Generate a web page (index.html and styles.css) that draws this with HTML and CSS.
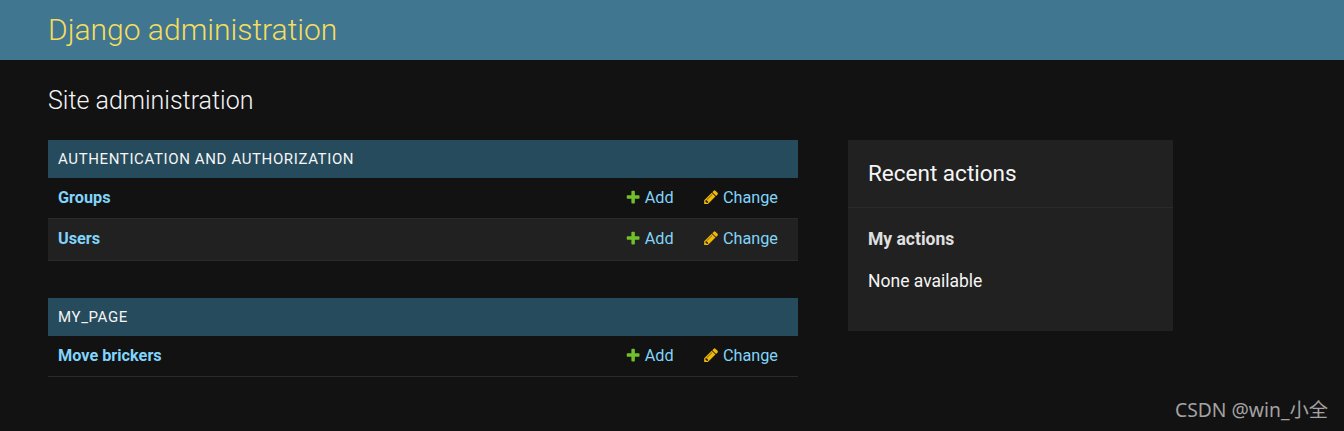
FILE: index.html
```html
<!DOCTYPE html>
<html lang="en">
<head>
<meta charset="utf-8">
<title>Site administration</title>
<link rel="stylesheet" href="styles.css">
</head>
<body>
<header class="header"><h1 class="brand">Django administration</h1></header>
<main class="content">
  <h2 class="page-title">Site administration</h2>
  <div class="columns">
    <div class="apps">
      <section class="module">
        <h3 class="caption">AUTHENTICATION AND AUTHORIZATION</h3>
        <div class="row">
          <a class="model">Groups</a>
          <span class="action add"><svg class="icon" viewBox="0 0 1792 1792"><path fill="#70bf2b" d="M1600 796v192q0 40-28 68t-68 28h-416v416q0 40-28 68t-68 28h-192q-40 0-68-28t-28-68v-416h-416q-40 0-68-28t-28-68v-192q0-40 28-68t68-28h416v-416q0-40 28-68t68-28h192q40 0 68 28t28 68v416h416q40 0 68 28t28 68z"/></svg>Add</span>
          <span class="action change"><svg class="icon" viewBox="0 0 1792 1792"><path fill="#efb80b" d="M491 1536l91-91-235-235-91 91v107h128v128h107zm523-928q0-22-22-22-10 0-17 7l-542 542q-7 7-7 17 0 22 22 22 10 0 17-7l542-542q7-7 7-17zm-54-192l416 416-832 832h-416v-416zm683 96q0 53-37 90l-166 166-416-416 166-165q36-38 90-38 53 0 91 38l235 234q37 39 37 91z"/></svg>Change</span>
        </div>
        <div class="row alt">
          <a class="model">Users</a>
          <span class="action add"><svg class="icon" viewBox="0 0 1792 1792"><path fill="#70bf2b" d="M1600 796v192q0 40-28 68t-68 28h-416v416q0 40-28 68t-68 28h-192q-40 0-68-28t-28-68v-416h-416q-40 0-68-28t-28-68v-192q0-40 28-68t68-28h416v-416q0-40 28-68t68-28h192q40 0 68 28t28 68v416h416q40 0 68 28t28 68z"/></svg>Add</span>
          <span class="action change"><svg class="icon" viewBox="0 0 1792 1792"><path fill="#efb80b" d="M491 1536l91-91-235-235-91 91v107h128v128h107zm523-928q0-22-22-22-10 0-17 7l-542 542q-7 7-7 17 0 22 22 22 10 0 17-7l542-542q7-7 7-17zm-54-192l416 416-832 832h-416v-416zm683 96q0 53-37 90l-166 166-416-416 166-165q36-38 90-38 53 0 91 38l235 234q37 39 37 91z"/></svg>Change</span>
        </div>
      </section>
      <section class="module">
        <h3 class="caption">MY_PAGE</h3>
        <div class="row">
          <a class="model">Move brickers</a>
          <span class="action add"><svg class="icon" viewBox="0 0 1792 1792"><path fill="#70bf2b" d="M1600 796v192q0 40-28 68t-68 28h-416v416q0 40-28 68t-68 28h-192q-40 0-68-28t-28-68v-416h-416q-40 0-68-28t-28-68v-192q0-40 28-68t68-28h416v-416q0-40 28-68t68-28h192q40 0 68 28t28 68v416h416q40 0 68 28t28 68z"/></svg>Add</span>
          <span class="action change"><svg class="icon" viewBox="0 0 1792 1792"><path fill="#efb80b" d="M491 1536l91-91-235-235-91 91v107h128v128h107zm523-928q0-22-22-22-10 0-17 7l-542 542q-7 7-7 17 0 22 22 22 10 0 17-7l542-542q7-7 7-17zm-54-192l416 416-832 832h-416v-416zm683 96q0 53-37 90l-166 166-416-416 166-165q36-38 90-38 53 0 91 38l235 234q37 39 37 91z"/></svg>Change</span>
        </div>
      </section>
    </div>
    <aside class="recent">
      <h2 class="recent-title">Recent actions</h2>
      <div class="recent-body">
        <h3 class="recent-sub">My actions</h3>
        <p class="recent-none">None available</p>
      </div>
    </aside>
  </div>
</main>
<div class="watermark">CSDN @win_小全</div>
</body>
</html>
```
FILE: styles.css
```css
html, body { margin: 0; padding: 0; }
body {
  height: 431px;
  overflow: hidden;
  position: relative;
  background: #121212;
  color: #f5f5f5;
  font-family: Roboto, sans-serif;
}
.header {
  height: 60px;
  box-sizing: border-box;
  padding: 0 48px 2px;
  background: #417690;
  display: flex;
  align-items: center;
}
.brand {
  margin: 0;
  font-size: 30px;
  font-weight: 300;
  color: #f5dd5d;
}
.content { padding: 0 48px; }
.page-title {
  margin: 0;
  padding-top: 26px;
  height: 55px;
  box-sizing: border-box;
  line-height: 30px;
  font-size: 25px;
  font-weight: 300;
  color: #f5f5f5;
}
.columns {
  margin-top: 25px;
  display: flex;
  gap: 50px;
  align-items: flex-start;
}
.apps { width: 750px; }
.module { margin-bottom: 37.5px; }
.caption {
  margin: 0;
  height: 38px;
  padding: 0 10px;
  display: flex;
  align-items: center;
  background: #264b5d;
  color: #f5f5f5;
  font-size: 15px;
  font-weight: 400;
  letter-spacing: 0.625px;
}
.row {
  height: 41.25px;
  box-sizing: border-box;
  border-bottom: 1px solid #2a2a2a;
  padding: 0 20px 2px 10px;
  display: flex;
  align-items: center;
  font-size: 16.25px;
  color: #81d4fa;
}
.alt { background: #212121; }
.model { font-weight: 700; flex: 1; }
.action { display: flex; align-items: center; gap: 4px; }
.add { margin-right: 29px; gap: 3px; }
.icon { width: 16.25px; height: 16.25px; flex: none; }
.recent {
  width: 325px;
  height: 191px;
  background: #212121;
  color: #f5f5f5;
}
.recent-title {
  margin: 0;
  height: 68px;
  box-sizing: border-box;
  padding: 0 20px 2px;
  display: flex;
  align-items: center;
  font-size: 22.5px;
  font-weight: 400;
  border-bottom: 1px solid #2a2a2a;
}
.recent-body { padding: 20px 20px 0; font-size: 17.5px; }
.recent-sub { margin: 0 0 20px; font-size: 17.5px; line-height: 22px; font-weight: 700; color: #e0e0e0; }
.recent-none { margin: 0; line-height: 22px; }
.watermark {
  position: absolute;
  right: 16px;
  top: 397px;
  font-family: "Noto Sans", "Noto Sans CJK SC", sans-serif;
  font-size: 19.3px;
  line-height: 26px;
  color: #a3a3a3;
}
```
